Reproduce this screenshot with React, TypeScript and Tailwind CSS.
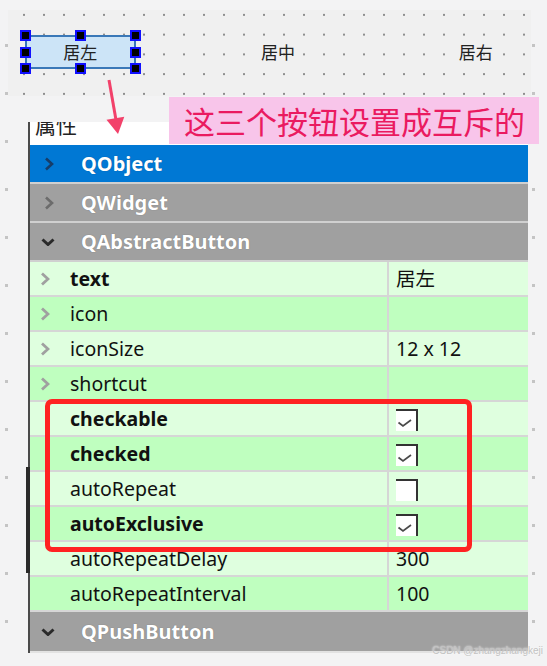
import React from 'react';

const rows = [
  { name: 'text', bold: true, value: '居左', arrow: true },
  { name: 'icon', arrow: true },
  { name: 'iconSize', value: '12 x 12', arrow: true },
  { name: 'shortcut', arrow: true },
  { name: 'checkable', bold: true, check: true },
  { name: 'checked', bold: true, check: true },
  { name: 'autoRepeat', check: false },
  { name: 'autoExclusive', bold: true, check: true },
  { name: 'autoRepeatDelay', value: '300' },
  { name: 'autoRepeatInterval', value: '100' },
];

const latin = "font-['Noto_Sans','Noto_Sans_CJK_SC',sans-serif]";
const cjk = "font-['Noto_Sans_CJK_SC',sans-serif]";

function ChevronRight({ color, w = 2.8 }: { color: string; w?: number }) {
  return (
    <svg width="10" height="14" viewBox="0 0 10 14">
      <polyline points="2,1.5 8,7 2,12.5" fill="none" stroke={color} strokeWidth={w} />
    </svg>
  );
}

function ChevronDown({ color }: { color: string }) {
  return (
    <svg width="14" height="8" viewBox="0 0 14 8">
      <polyline points="1.5,1.5 7,6.5 12.5,1.5" fill="none" stroke={color} strokeWidth="3" />
    </svg>
  );
}

function CheckBox({ on }: { on: boolean }) {
  return (
    <div className="w-[22px] h-[22px] mt-[3px] bg-white border-t-2 border-r-2 border-[#333]">
      {on && (
        <svg width="20" height="20" viewBox="0 0 20 20">
          <polyline points="2.5,11.5 7,15 15,9" fill="none" stroke="#4a4a4a" strokeWidth="1.7" />
        </svg>
      )}
    </div>
  );
}

function GroupHeader({ label, open, bg, chevron }: { label: string; open?: boolean; bg: string; chevron: string }) {
  return (
    <div className={`h-[39px] flex items-center border-b-2 border-[#d0d0d0] ${bg}`}>
      {open ? (
        <div className="w-[51px] pl-[11px] flex items-center">
          <ChevronDown color={chevron} />
        </div>
      ) : (
        <div className="w-[51px] pl-[14px] flex items-center">
          <ChevronRight color={chevron} w={2.6} />
        </div>
      )}
      <span className={`${latin} text-[20px] font-bold text-white [text-shadow:0_0_1px_rgba(0,0,0,0.35)]`}>{label}</span>
    </div>
  );
}

function Handle({ pos }: { pos: string }) {
  return <div className={`absolute w-[11px] h-[11px] bg-black border-2 border-[#1010ff] ${pos}`} />;
}

export default function App() {
  return (
    <div className="relative w-[547px] h-[666px] overflow-hidden bg-[#f3f3f4]">
      {/* form canvas */}
      <div className="ml-[8px] mt-[10px] w-[523px] h-[86px] bg-[#f0f0f0] bg-[radial-gradient(circle,#8e8e8e_1.1px,transparent_1.5px)] bg-[size:20px_19.75px] bg-[position:6px_-5px] flex pl-[17px] pt-[25px] gap-[87px]">
        <div className="relative w-[111px] h-[34px] bg-[#cce4f7] border-2 border-[#3a78b8] flex items-center justify-center">
          <span className={`${cjk} text-[17px] text-[#222]`}>居左</span>
          <Handle pos="-left-[7px] -top-[7px]" />
          <Handle pos="left-[48px] -top-[7px]" />
          <Handle pos="-right-[7px] -top-[7px]" />
          <Handle pos="-left-[7px] top-[10px]" />
          <Handle pos="-right-[7px] top-[10px]" />
          <Handle pos="-left-[7px] -bottom-[7px]" />
          <Handle pos="left-[48px] -bottom-[7px]" />
          <Handle pos="-right-[7px] -bottom-[7px]" />
        </div>
        <div className="w-[111px] h-[34px] flex items-center justify-center">
          <span className={`${cjk} text-[17px] text-[#222]`}>居中</span>
        </div>
        <div className="w-[111px] h-[34px] flex items-center justify-center">
          <span className={`${cjk} text-[17px] text-[#222]`}>居右</span>
        </div>
      </div>

      {/* property editor */}
      <div className="ml-[28px] mt-[26px] w-[500px] border-l-2 border-[#4a4a4a]">
        <div className="h-[23px] bg-white overflow-hidden pl-[5px]">
          <div className={`${cjk} text-[21px] leading-[21px] -mt-[8px] text-[#222]`}>属性</div>
        </div>
        <GroupHeader label="QObject" bg="bg-[#0078d4]" chevron="#163d69" />
        <GroupHeader label="QWidget" bg="bg-[#a0a0a0]" chevron="#6c6c6c" />
        <GroupHeader label="QAbstractButton" open bg="bg-[#a0a0a0]" chevron="#2a2a2a" />
        {rows.map((r, i) => (
          <div
            key={r.name}
            className={`h-[35px] flex border-b-2 border-[#d6d6d6] ${i % 2 === 0 ? 'bg-[#dfffdf]' : 'bg-[#bfffbf]'}`}
          >
            <div className="w-[359px] flex items-center border-r-2 border-[#d6d6d6]">
              <div className="w-[40px] pl-[10px] flex items-center">
                {r.arrow && <ChevronRight color="#a0a0a0" />}
              </div>
              <span className={`${latin} text-[19.5px] text-[#111] ${r.bold ? 'font-bold' : ''}`}>{r.name}</span>
            </div>
            <div className="flex-1 flex items-center pl-[7px]">
              {r.check !== undefined ? (
                <CheckBox on={r.check} />
              ) : (
                <span className={`${latin} text-[19.5px] text-[#111]`}>{r.value}</span>
              )}
            </div>
          </div>
        ))}
        <div className="h-[41px] flex items-center bg-[#a0a0a0] border-b-2 border-[#e2e2e2]">
          <div className="w-[51px] pl-[11px] flex items-center">
            <ChevronDown color="#2a2a2a" />
          </div>
          <span className={`${latin} text-[20px] font-bold text-white [text-shadow:0_0_1px_rgba(0,0,0,0.35)]`}>QPushButton</span>
        </div>
      </div>

      {/* darker splitter segment on the panel edge */}
      <div className="absolute left-[26px] top-[467px] w-[4px] h-[106px] bg-[#2a2a2a]" />

      {/* outer form grid dots */}
      <div className="absolute left-[5px] top-[44px] flex flex-col gap-[45px]">
        {Array.from({ length: 13 }).map((_, i) => (
          <div key={i} className="w-[3px] h-[3px] bg-[#c4c4c4]" />
        ))}
      </div>
      <div className="absolute left-[532px] top-[44px] flex flex-col gap-[45px]">
        {Array.from({ length: 13 }).map((_, i) => (
          <div key={i} className="w-[3px] h-[3px] bg-[#c4c4c4]" />
        ))}
      </div>

      {/* annotation arrow */}
      <svg className="absolute left-0 top-0" width="547" height="140">
        <line x1="109" y1="80" x2="116" y2="120" stroke="#f2416a" strokeWidth="3" />
        <polygon points="118,134 124.3,116.7 106.5,119.7" fill="#f2416a" />
      </svg>

      {/* annotation callout */}
      <div className="absolute left-[169px] top-[97px] w-[370px] h-[47px] bg-[#f8c5ea] flex items-center pl-[15px]">
        <span className={`${cjk} text-[31px] leading-none text-[#ea1a60]`}>这三个按钮设置成互斥的</span>
      </div>

      {/* red highlight box */}
      <div className="absolute left-[45px] top-[399px] w-[427px] h-[153px] border-[5px] border-[#ff2222] rounded-[7px]" />

      <div className="absolute right-[4px] bottom-[8px] text-[10px] text-[#c2c2c2] font-['Liberation_Sans',sans-serif] [text-shadow:0_0_2px_#fff]">
        CSDN @zhangzhangkeji
      </div>
    </div>
  );
}
